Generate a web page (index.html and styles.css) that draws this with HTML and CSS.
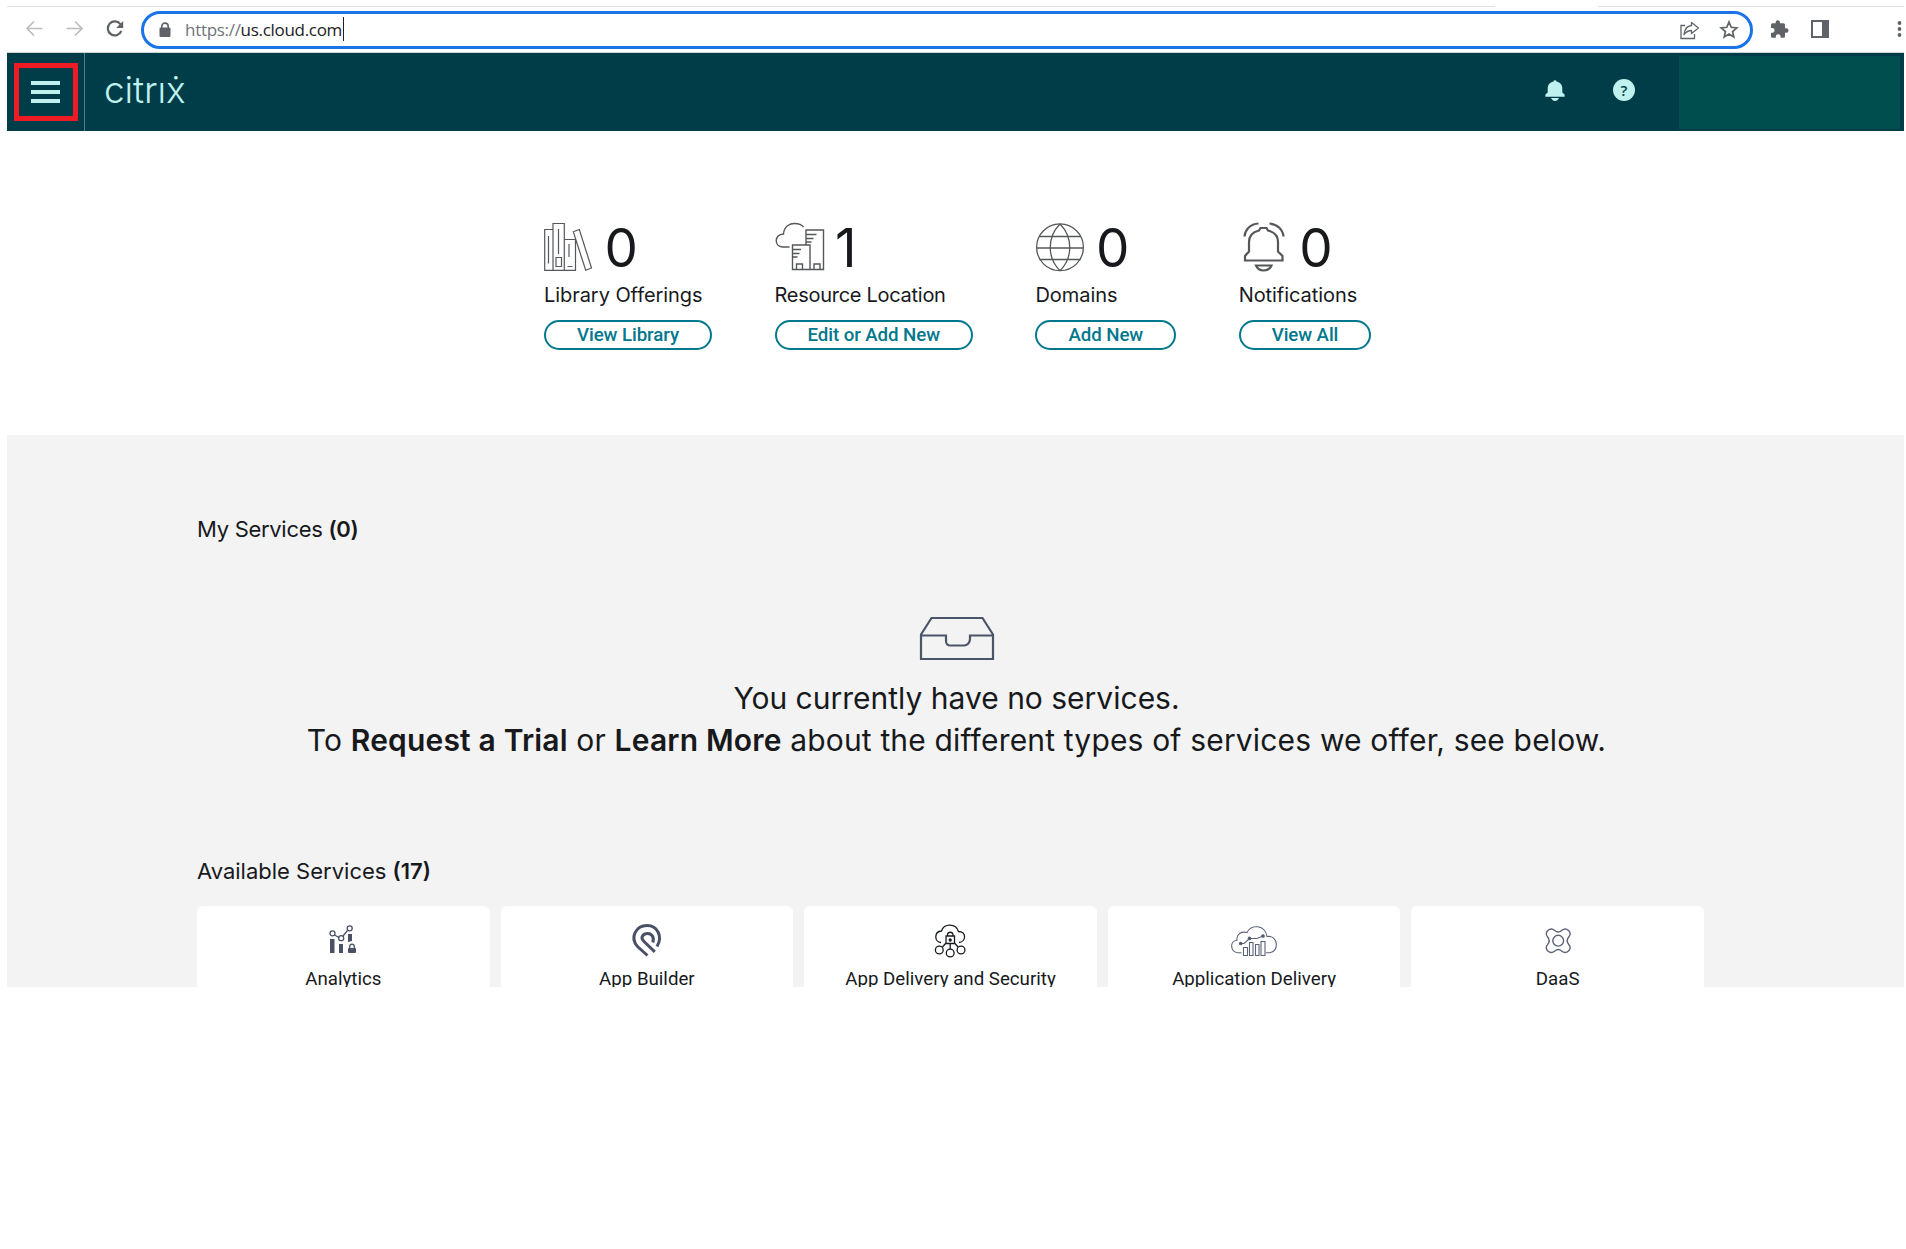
FILE: index.html
```
<!DOCTYPE html>
<html lang="en">
<head>
<meta charset="utf-8">
<title>Citrix Cloud</title>
<link rel="stylesheet" href="styles.css">
</head>
<body>
<div class="page">
  <div class="toolbar">
    <svg class="nav-icons" width="134" height="45" viewBox="7 7 134 45" fill="none">
      <path d="M42.500 28.500H27M34 21.500L27 28.500L34 35.500" stroke="#bbbdc0" stroke-width="1.700"/>
      <path d="M66.500 28.500H82M75 21.500L82 28.500L75 35.500" stroke="#bbbdc0" stroke-width="1.700"/>
      <path d="M120.600 24.500A7 7 0 1 0 121.300 31" stroke="#5f6368" stroke-width="2.200"/>
      <path d="M123.200 21V28H116.200Z" fill="#5f6368"/>
    </svg>
    <div class="omnibox">
      <svg width="12" height="16" viewBox="0 0 12 16"><path d="M2.800 6V4.300a3.200 3.200 0 0 1 6.400 0V6" fill="none" stroke="#5f6368" stroke-width="1.600"/><rect x=".5" y="5.500" width="11" height="9.500" rx="1.300" fill="#5f6368"/></svg>
      <span class="url"><span class="scheme">https://</span>us.cloud.com</span><span class="caret"></span>
      <svg class="share" width="62" height="24" viewBox="0 0 62 24" fill="none" stroke="#5f6368">
        <path d="M6 7.500H2V20.500H15.500V16" stroke-width="1.300"/>
        <path d="M12.500 4.500L19.500 10L12.500 15.500V12.500C9 12.500 7 14 5 16.500C5.500 11.500 8 8 12.500 7.500Z" stroke-width="1.300" stroke-linejoin="round"/>
        <path d="M50 4L52.200 9.300L57.800 9.800L53.600 13.500L54.800 19L50 16.100L45.200 19L46.400 13.500L42.200 9.800L47.800 9.300Z" stroke-width="1.700"/>
      </svg>
    </div>
    <svg class="ext-icons" width="151" height="45" viewBox="1753 7 151 45">
      <path d="M1786.300 28.300H1785V24.800A1.600 1.600 0 0 0 1783.400 23.200H1780V22.400A2.200 2.200 0 0 0 1775.600 22.400V23.200H1772.500A1.600 1.600 0 0 0 1771 24.800V28H1772.200A2.400 2.400 0 0 1 1772.200 32.800H1771V36.200A1.600 1.600 0 0 0 1772.600 37.800H1775.800V36.600A2.400 2.400 0 0 1 1780.600 36.600V37.800H1783.400A1.600 1.600 0 0 0 1785 36.200V32.800H1786.300A2.250 2.250 0 0 0 1786.300 28.300Z" fill="#5f6368"/>
      <path d="M1811 20H1829V38H1811ZM1813 22V36H1822V22Z" fill="#5f6368" fill-rule="evenodd"/>
      <g fill="#5f6368"><circle cx="1899.500" cy="23" r="1.900"/><circle cx="1899.500" cy="29" r="1.900"/><circle cx="1899.500" cy="35" r="1.900"/></g>
    </svg>
  </div>

  <header class="header">
    <div class="menu"><div class="menu-mark"><i></i><i></i><i></i></div></div>
    <div class="logo">citrıẋ</div>
    <svg class="bell" width="20" height="22" viewBox="0 0 20 22" fill="#bff2ee"><path d="M8.500 1.500A1.500 1.300 0 0 1 11.500 1.500C15.500 2.300 17.300 5 17.300 8.500V12.500L19.600 14.500V16.700H.4V14.500L2.700 12.500V8.500C2.700 5 4.500 2.300 8.500 1.500Z"/><path d="M6 18H14C13 20 11.700 21 10 21S7 20 6 18Z"/></svg>
    <div class="help">?</div>
    <div class="account"></div>
  </header>

  <section class="stats">
    <div class="stat">
      <div class="figure">
        <svg width="50" height="50" viewBox="0 0 50 50" fill="none" stroke="#55575a" stroke-width="1.200">
          <path d="M.7 7.500H9V48.300H.7ZM9 1.500H20.300V48.300H9ZM20.300 17.500H31.500V48.300H20.300ZM29.300 9.700L35.300 7.500L47.500 46L41.700 48.300ZM4.500 14V41.500M14.500 7V32M12 35.500H17.500V44.500H12ZM25 22V35M23.500 44.500H28.500"/>
        </svg><span>0</span>
      </div>
      <div class="label">Library Offerings</div>
      <button class="pill">View Library</button>
    </div>
    <div class="stat">
      <div class="figure">
        <svg width="50" height="50" viewBox="0 0 50 50" fill="none" stroke="#55575a" stroke-width="1.400">
          <path d="M14.500 25H7.500C-1 24-1 13 8.500 12C9 4 15 1.500 19.500 1.500C24 1.500 27 3 28.500 5M17.500 23H35V47.500H17.500ZM31 23V8H48.500V47.500H35M31 12.500H41.500M31 16.500H38.500M31 20H36.500M17.500 27.500H26M17.500 31.500H24.500M17.500 35H22.500M21.500 47.500V42H27.500V47.500M39 47.500V42H45V47.500"/>
        </svg><span>1</span>
      </div>
      <div class="label label-tight">Resource Location</div>
      <button class="pill">Edit or Add New</button>
    </div>
    <div class="stat">
      <div class="figure">
        <svg width="50" height="50" viewBox="0 0 50 50" fill="none" stroke="#55575a" stroke-width="1.300">
          <circle cx="25" cy="25.300" r="23.400"/><path d="M25 2C12 15 12 36 25 48.600C38 36 38 15 25 2M4.500 14.500H45.500M1.600 26H48.400M4.500 37.500H45.500"/>
        </svg><span>0</span>
      </div>
      <div class="label">Domains</div>
      <button class="pill">Add New</button>
    </div>
    <div class="stat">
      <div class="figure">
        <svg width="50" height="50" viewBox="0 0 50 50" fill="none" stroke="#55575a" stroke-width="2.200">
          <path d="M6 38.500V34L10 29.500V20C10 14 14 10 20 8.500L21.500 6H27.500L29 8.500C35 10 39 14 39 20V29.500L43.500 34V38.500ZM17 43.500C18.500 47 21 48.500 24.500 48.500S31 47 32.500 43.500ZM5.500 14.500C6 8 11 2 19.500 1.500M44.500 14.500C44 8 38.500 2 30.500 1.500"/>
        </svg><span>0</span>
      </div>
      <div class="label">Notifications</div>
      <button class="pill">View All</button>
    </div>
  </section>

  <main class="services">
    <h2 class="mine">My Services <b>(0)</b></h2>
    <div class="empty">
      <svg width="76" height="46" viewBox="0 0 76 46" fill="none" stroke="#4a5568" stroke-width="2.200"><path d="M2 18.500L12.500 2H63.500L74 18.500V43H2ZM2 19.500H27V25C27 28 29 29.500 31 29.500H45C48 29.500 51 27 51 23V19.500H74"/></svg>
      <p class="first">You currently have no services.</p>
      <p class="second">To <b>Request a Trial</b> or <b>Learn More</b> about the different types of services we offer, see below.</p>
    </div>
    <h2 class="available">Available Services <b>(17)</b></h2>
    <div class="cards">
      <div class="card">
        <svg width="46" height="36" viewBox="0 0 46 36" stroke="#4a5166" fill="none" stroke-width="1.300">
          <g fill="#4a5166" stroke="none"><path d="M10 17H14.500V31H10ZM19 22H23V31H19ZM28 12H32V19L28 20Z"/><rect x="28" y="26" width="8" height="5" rx="1"/></g>
          <path d="M29.700 26.500V24.500A2.300 2.300 0 0 1 34.300 24.500V26.500M14.500 13L19 15.500M23 14L27.500 8.500"/><circle cx="12.500" cy="11.300" r="2.500"/><circle cx="21.200" cy="16.200" r="2.500"/><circle cx="29.700" cy="6.300" r="2.500"/>
        </svg><span>Analytics</span>
      </div>
      <div class="card">
        <svg width="46" height="36" viewBox="0 0 46 36" stroke="#4a5166" fill="none" stroke-width="3">
          <path d="M23.500 33.500L13.500 24.500C5.500 15.500 12 3.500 23 3.500C33.500 3.500 39 14.500 33 24.500"/><path d="M30.800 29.800L20 19.500C15.500 15 19.500 11.500 23.500 11.500C28 11.500 30.500 15.500 28.800 20.500"/>
        </svg><span>App Builder</span>
      </div>
      <div class="card">
        <svg width="46" height="36" viewBox="0 0 46 36" stroke="#171a1d" fill="none" stroke-width="1.300">
          <path d="M14 20.500C7 20 7 9.500 14.500 9C17 1 29 1 31.500 9.500C39.500 9.500 39.500 19.500 32 20.500M19 14H27.500V21.500H19ZM20.500 14V12.500A2.800 2.800 0 0 1 26 12.500V14M19 21L15.500 25M27.500 21L31 25M23.200 22V27"/><circle cx="12.300" cy="28" r="3.900"/><circle cx="23.200" cy="31" r="3.900"/><circle cx="34" cy="28" r="3.900"/><circle cx="23.200" cy="18" r="1" fill="#171a1d"/>
        </svg><span>App Delivery and Security</span>
      </div>
      <div class="card">
        <svg width="46" height="36" viewBox="0 0 46 36" stroke="#5b6376" fill="none" stroke-width="1.100">
          <path d="M10.500 30.700H7C-1 30-1.500 19 6 18.200C5 12 10.500 9 16 10.500C20 2 34 2.500 36 14.500C48 13 48 30.500 38.500 30.700H35M12.500 25.500H16.500V33.500H12.500ZM18.500 20.500H22V33.500H18.500ZM24.500 22.500H28V33.500H24.500ZM30 19.500H34V33.500H30ZM9.500 21.500H13L18.500 16.500H26L32 14"/><g fill="#4a5166"><circle cx="9.700" cy="21.500" r="1.300"/><circle cx="18.500" cy="16.400" r="1.300"/><circle cx="32" cy="14" r="1.300"/></g>
        </svg><span>Application Delivery</span>
      </div>
      <div class="card">
        <svg width="46" height="36" viewBox="0 0 46 36" stroke="#5b6376" fill="none" stroke-width="1.400">
          <path d="M19.800 8.500C15 4.500 8.500 10.500 12.500 14.800C14.800 17.500 14.800 20 12.500 22.700C8.500 27 15 33 19.800 29C22 27 24.400 27 26.600 29C31.400 33 37.900 27 33.900 22.700C31.600 20 31.600 17.500 33.900 14.800C37.900 10.500 31.400 4.500 26.600 8.500C24.400 10.500 22 10.500 19.800 8.500Z"/><circle cx="23.200" cy="18.700" r="5.400"/>
        </svg><span>DaaS</span>
      </div>
    </div>
  </main>
</div>
</body>
</html>
```

FILE: styles.css
```
* { box-sizing: border-box; }
body { margin: 0; background: #fff; color: #17191c; font-family: Inter, sans-serif; }
svg { display: block; flex: none; }
p, h2 { margin: 0; font-weight: 400; }
b { font-weight: 600; }

.page { width: 1897px; margin-left: 7px; padding-top: 6px; }

.toolbar { display: flex; height: 47px; border-bottom: 1px solid #cfd3d6; position: relative; padding-top: 1px; }
.toolbar::before { content: ""; position: absolute; top: 0; left: 0; right: 0; height: 1px; background: linear-gradient(90deg, #dfe1e5 1488px, #fff 1488px 1591px, #dfe1e5 1591px); }
.omnibox { width: 1612px; height: 38px; margin-top: 4px; border: 3px solid #1a73e8; border-radius: 19px; display: flex; align-items: center; padding: 0 9px 0 15px; }
.url { font: 17px/30px "Open Sans", sans-serif; letter-spacing: -.3px; margin-left: 14px; color: #202124; }
.scheme { color: #6f7377; }
.caret { width: 1px; height: 24px; background: #202124; margin-left: 1px; margin-top: -2px; }
.share { margin-left: auto; }

.header { display: flex; align-items: center; height: 78px; background: #003d49; color: #bff2ee; padding-right: 4px; }
.menu { width: 78px; height: 78px; border-right: 1px solid #527a82; padding: 10px 0 0 7px; }
.menu-mark { width: 64px; height: 58px; border: 5px solid #ed1c24; display: flex; flex-direction: column; align-items: center; justify-content: center; gap: 5px; padding: 0 1px 1px 0; }
.menu-mark i { width: 29px; height: 4px; background: #bff2ee; }
.logo { width: 90px; margin: -4px 0 0 19px; font-size: 37px; font-weight: 300; line-height: 50px; letter-spacing: -.15px; white-space: nowrap; }
.bell { margin-left: auto; margin-top: -3px; }
.help { width: 22px; height: 22px; border-radius: 50%; background: #bff2ee; color: #003d49; margin: -4px 44px 0 48px; text-align: center; font: 600 15px/22px "Open Sans", sans-serif; }
.account { width: 221px; height: 73px; background: #004f4e; }

.stats { display: flex; gap: 62.500px; height: 304px; padding: 91px 0 0 537px; }
.stat { display: flex; flex-direction: column; align-items: flex-start; }
.figure { display: flex; height: 50px; }
.figure span { font-size: 53px; line-height: 50px; margin: 1px 0 0 10.500px; }
.label { font-size: 20px; line-height: 24px; letter-spacing: -.06px; margin-top: 11px; white-space: nowrap; }
.label-tight { letter-spacing: -.28px; }
.pill { height: 30px; padding: 0 31px; margin-top: 13px; border: 2px solid #02788c; border-radius: 15px; background: #fff; color: #02788c; font: 500 18.700px/24px Roboto, sans-serif; letter-spacing: -.08px; white-space: nowrap; }

.services { height: 552px; overflow: hidden; background: #f3f3f3; padding: 80px 200px 0 190px; }
h2 { font-size: 22px; line-height: 28px; }
.mine { letter-spacing: -.3px; }
.empty { display: flex; flex-direction: column; align-items: center; margin: 73px 0 0 12px; }
.empty p { font-size: 30px; line-height: 42px; white-space: nowrap; }
.empty .first { margin-top: 15px; }
.empty .second { letter-spacing: .17px; }
.available { margin-top: 96px; }
.cards { display: grid; grid-template-columns: repeat(5, 1fr); gap: 11px; margin-top: 21px; }
.card { height: 120px; background: #fff; border-radius: 6px; display: flex; flex-direction: column; align-items: center; padding-top: 16px; font: 18.700px/24px Roboto, sans-serif; }
.card span { margin-top: 9px; }
```
